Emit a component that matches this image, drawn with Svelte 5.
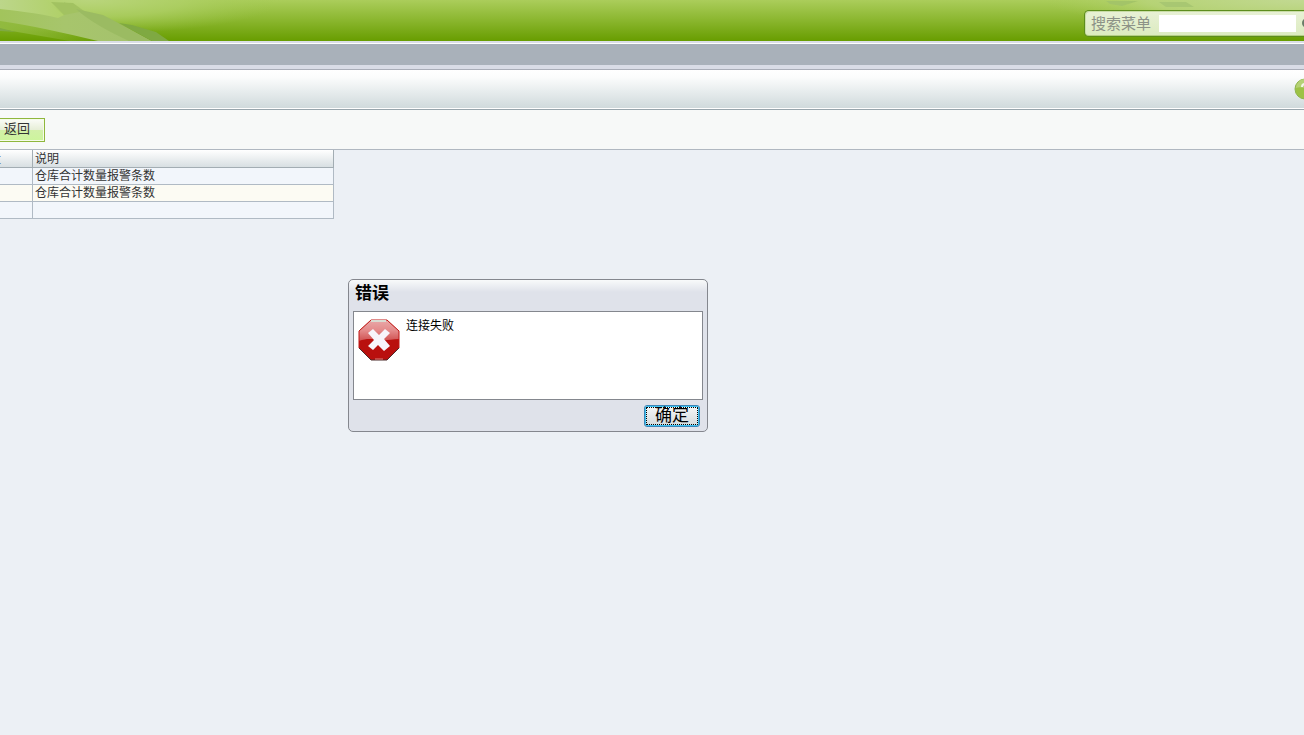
<script>
  let keyword = $state('');
  let dialogOpen = $state(true);

  const rows = [
    { name: '', note: '仓库合计数量报警条数' },
    { name: '', note: '仓库合计数量报警条数' },
    { name: '', note: '' }
  ];

  function closeDialog() {
    dialogOpen = false;
  }
</script>

<div class="page">
  <header class="banner">
    <svg class="leaves left" viewBox="0 0 300 41" aria-hidden="true">
      <defs>
        <radialGradient id="glow" gradientUnits="userSpaceOnUse" cx="0" cy="0" r="1" gradientTransform="translate(90 0) scale(190 34)">
          <stop offset="0" stop-color="#b9d57c" />
          <stop offset="0.5" stop-color="#afd067" stop-opacity="0.75" />
          <stop offset="1" stop-color="#a2c851" stop-opacity="0" />
        </radialGradient>
        <linearGradient id="tip" x1="0" x2="1" y1="0" y2="0">
          <stop offset="0" stop-color="#bcd68a" />
          <stop offset="1" stop-color="#b0d068" />
        </linearGradient>
        <linearGradient id="blade" x1="0" x2="1" y1="0" y2="0">
          <stop offset="0" stop-color="#a2c45c" />
          <stop offset="0.5" stop-color="#a7c56c" />
          <stop offset="1" stop-color="#a5c26d" />
        </linearGradient>
        <linearGradient id="shade" x1="0" x2="1" y1="0" y2="0">
          <stop offset="0" stop-color="#91ba3f" />
          <stop offset="1" stop-color="#91ba3f" stop-opacity="0" />
        </linearGradient>
      </defs>
      <rect width="300" height="41" fill="url(#glow)" />
      <path d="M0 19L40 26L100 41H70L0 29Z" fill="url(#shade)" />
      <path d="M0 9L64 15L64 2L77 9L95 18L130 41H98C64 33 30 25 0 21Z" fill="url(#blade)" />
      <path d="M0 0H46L52 6L64 15L58 18C38 13 18 11 0 9Z" fill="url(#tip)" />
      <path d="M51 2L73 3L84 11L64 15Z" fill="#a2c261" />
      <path d="M76 9L103 15L126 27L152 41H129C106 30 91 22 76 9Z" fill="#9bbb62" />
      <path d="M119 23L132 25L156 32L169 41H152Z" fill="#7fa942" />
      <path d="M0 28L16 32L0 31Z" fill="#7fa942" />
    </svg>
    <svg class="leaves right" viewBox="0 0 300 41" aria-hidden="true">
      <defs>
        <radialGradient id="glowRight" gradientUnits="userSpaceOnUse" cx="0" cy="0" r="1" gradientTransform="translate(300 0) scale(260 30)">
          <stop offset="0" stop-color="#c2d992" />
          <stop offset="0.6" stop-color="#bad57e" stop-opacity="0.8" />
          <stop offset="1" stop-color="#abcd5b" stop-opacity="0" />
        </radialGradient>
      </defs>
      <rect width="300" height="41" fill="url(#glowRight)" />
      <path d="M102 1H134L118 6L106 4Z" fill="#a3c468" />
      <path d="M155 2H182L190 7H162Z" fill="#a8c772" />
    </svg>
    <form class="search" onsubmit={(e) => e.preventDefault()}>
      <label for="menu-search">搜索菜单</label>
      <input id="menu-search" type="text" bind:value={keyword} />
      <button class="find" type="submit" aria-label="搜索">
        <svg width="12" height="12" viewBox="0 0 12 12">
          <circle cx="5" cy="5" r="4" fill="#dbe8ee" stroke="#6a7c68" stroke-width="2" />
          <path d="M8 8L11 11" stroke="#4d6b2c" stroke-width="2" />
        </svg>
      </button>
    </form>
  </header>

  <div class="menubar"></div>

  <div class="titlebar">
    <button class="help" type="button" aria-label="帮助">
      <svg width="22" height="22" viewBox="0 0 22 22">
        <circle cx="11" cy="11" r="10" fill="#9dc245" stroke="#8fb550" stroke-width="1" />
        <path d="M2 10A9 9 0 0 1 20 10C14 13 8 7 2 10Z" fill="#b5d176" />
        <path d="M8 9C8 5 14 5 14 9C14 11 11 11 11 13" fill="none" stroke="#f2f8e6" stroke-width="2" />
        <circle cx="11" cy="16" r="1" fill="#f2f8e6" />
      </svg>
    </button>
  </div>

  <div class="toolbar">
    <button class="back" type="button">返回</button>
  </div>

  <div class="content">
    <table>
      <thead>
        <tr>
          <th class="name" scope="col">数量</th>
          <th class="note" scope="col">说明</th>
        </tr>
      </thead>
      <tbody>
        {#each rows as row}
          <tr>
            <td>{row.name}</td>
            <td>{row.note}</td>
          </tr>
        {/each}
      </tbody>
    </table>
  </div>

  {#if dialogOpen}
    <div class="dialog" role="alertdialog" aria-labelledby="dialog-title" aria-describedby="dialog-text">
      <h2 id="dialog-title">错误</h2>
      <div class="message">
        <svg width="42" height="42" viewBox="0 0 42 42" aria-hidden="true">
          <defs>
            <linearGradient id="gloss" x1="0" x2="0" y1="0" y2="1">
              <stop offset="0" stop-color="#e9a9a9" />
              <stop offset="0.5" stop-color="#e48a8a" />
              <stop offset="1" stop-color="#cf5050" />
            </linearGradient>
          </defs>
          <path d="M13 1H29L41 12V29L29 41H13L1 29V12Z" fill="#b9100e" />
          <path d="M13 1H29L41 12V20C34 20 28 22 21 21C14 20 9 19 1 22V12Z" fill="url(#gloss)" />
          <path d="M1 29V12L13 1H29L41 12V29" fill="none" stroke="#c01916" />
          <path d="M1 29L13 41H29L41 29" fill="none" stroke="#4b2a2a" />
          <path d="M13 2H28" stroke="#d9dcd2" stroke-width="2" />
          <path d="M17 40H25" stroke="#dd8078" />
          <path d="M10 14L15 10L21 16L27 10L32 14L26 20L32 27L26 32L20 26L15 31L10 27L16 21Z" fill="#f7f5fb" />
        </svg>
        <p id="dialog-text">连接失败</p>
      </div>
      <div class="actions">
        <button type="button" onclick={closeDialog}>确定</button>
      </div>
    </div>
  {/if}
</div>

<style>
  :global(body) {
    background: #ecf0f5;
    font-family: "Liberation Sans", "Noto Sans CJK SC", sans-serif;
    font-size: 12px;
    color: #333;
  }

  .page {
    position: relative;
    min-height: 100vh;
    overflow: hidden;
  }

  button {
    font-family: inherit;
    cursor: pointer;
  }

  .banner {
    position: relative;
    display: flex;
    justify-content: flex-end;
    align-items: flex-start;
    box-sizing: border-box;
    height: 44px;
    padding-top: 10px;
    background: linear-gradient(#abcd5b, #8ab62e 50%, #689d00) top / 100% 41px no-repeat, #fff;
    border-bottom: 1px solid #fff;
    box-shadow: inset 0 -2px 0 #dadee6;
  }

  .leaves {
    position: absolute;
    top: 0;
    width: 300px;
    height: 41px;
  }

  .left {
    left: 0;
  }

  .right {
    right: 0;
  }

  .search {
    position: relative;
    display: flex;
    align-items: center;
    box-sizing: border-box;
    width: 220px;
    height: 27px;
    padding-left: 6px;
    background: linear-gradient(#e8f1d6, #dcebbf);
    border: 1px solid #5d8d1d;
    border-right: 0;
    border-radius: 5px 0 0 5px;
    box-shadow: inset 1px 1px 0 #c9dda6, inset 0 -1px 0 #b5cf85;
    overflow: hidden;
  }

  .search label {
    width: 68px;
    flex: none;
    font-size: 15px;
    line-height: 24px;
    color: #8c9287;
  }

  .search input {
    flex: none;
    box-sizing: border-box;
    width: 137px;
    height: 17px;
    padding: 0 2px;
    border: 0;
    outline: none;
    background: #fff;
  }

  .find {
    flex: none;
    display: flex;
    margin-left: 6px;
    padding: 0;
    border: 0;
    background: none;
  }

  .menubar {
    height: 21px;
    background: #a9b1ba;
    border-bottom: 4px solid #d9dce6;
  }

  .titlebar {
    display: flex;
    justify-content: flex-end;
    align-items: center;
    height: 38px;
    background: linear-gradient(#fff, #fbfcfc 20%, #d0dadc);
    border-top: 1px solid #a9adb8;
    border-bottom: 1px solid #fff;
  }

  .help {
    display: flex;
    margin-right: -12px;
    padding: 0;
    border: 0;
    background: none;
  }

  .toolbar {
    display: flex;
    align-items: flex-start;
    box-sizing: border-box;
    height: 41px;
    padding-top: 8px;
    background: #f7f9f8;
    border-top: 1px solid #98a5ac;
    border-bottom: 1px solid #b0b8c1;
  }

  .back {
    box-sizing: border-box;
    width: 80px;
    height: 24px;
    margin-left: -35px;
    padding: 0 14px 2px 0;
    text-align: right;
    font-size: 13px;
    line-height: 20px;
    color: #333;
    background: linear-gradient(#fbfcf8, #e6eed6 50%, #d2f0a8 51%, #ccf59c);
    border: 1px solid #8fb73c;
    box-shadow: inset 0 0 0 1px #f5fbe9;
  }

  .content {
    margin-left: -88px;
  }

  table {
    width: 422px;
    table-layout: fixed;
    border-collapse: separate;
    border-spacing: 0;
  }

  th,
  td {
    box-sizing: border-box;
    height: 17px;
    padding: 1px 2px 0;
    border-right: 1px solid #b0bac4;
    border-bottom: 1px solid #b0bac4;
    font-size: 12px;
    font-weight: normal;
    line-height: 15px;
    text-align: left;
    white-space: nowrap;
  }

  th {
    height: 18px;
    background: linear-gradient(#fff, #d8dfe2);
    border-color: #a3adb3;
  }

  .name {
    width: 121px;
    padding-right: 31px;
    text-align: right;
  }

  td {
    background: #f2f6fb;
  }

  tbody tr:nth-child(2) td {
    background: #fcfbf3;
  }

  .dialog {
    position: absolute;
    top: 279px;
    left: 348px;
    box-sizing: border-box;
    width: 360px;
    padding: 0 4px 4px;
    background: linear-gradient(#f8fafa, #dfe2ea 12px);
    border: 1px solid #84878e;
    border-radius: 5px;
    color: #000;
  }

  .dialog h2 {
    margin: 0;
    padding: 2px 2px 5px;
    font-size: 17px;
    line-height: 24px;
  }

  .message {
    display: flex;
    align-items: flex-start;
    gap: 6px;
    box-sizing: border-box;
    min-height: 89px;
    padding: 7px 4px;
    background: #fff;
    border: 1px solid #84878e;
  }

  .message p {
    margin: 0;
    font-size: 12px;
    line-height: 14px;
  }

  .actions {
    display: flex;
    justify-content: flex-end;
    padding: 5px 3px 0;
  }

  .actions button {
    box-sizing: border-box;
    width: 56px;
    height: 22px;
    padding: 0;
    font-size: 17px;
    line-height: 18px;
    color: #000;
    background: linear-gradient(#f5f7f7, #d3dadc);
    border: 1px solid #3d84b4;
    border-radius: 3px;
    box-shadow: inset 0 0 0 1px #3cc4f4;
    outline: 1px dotted #000;
    outline-offset: -3px;
  }
</style>
